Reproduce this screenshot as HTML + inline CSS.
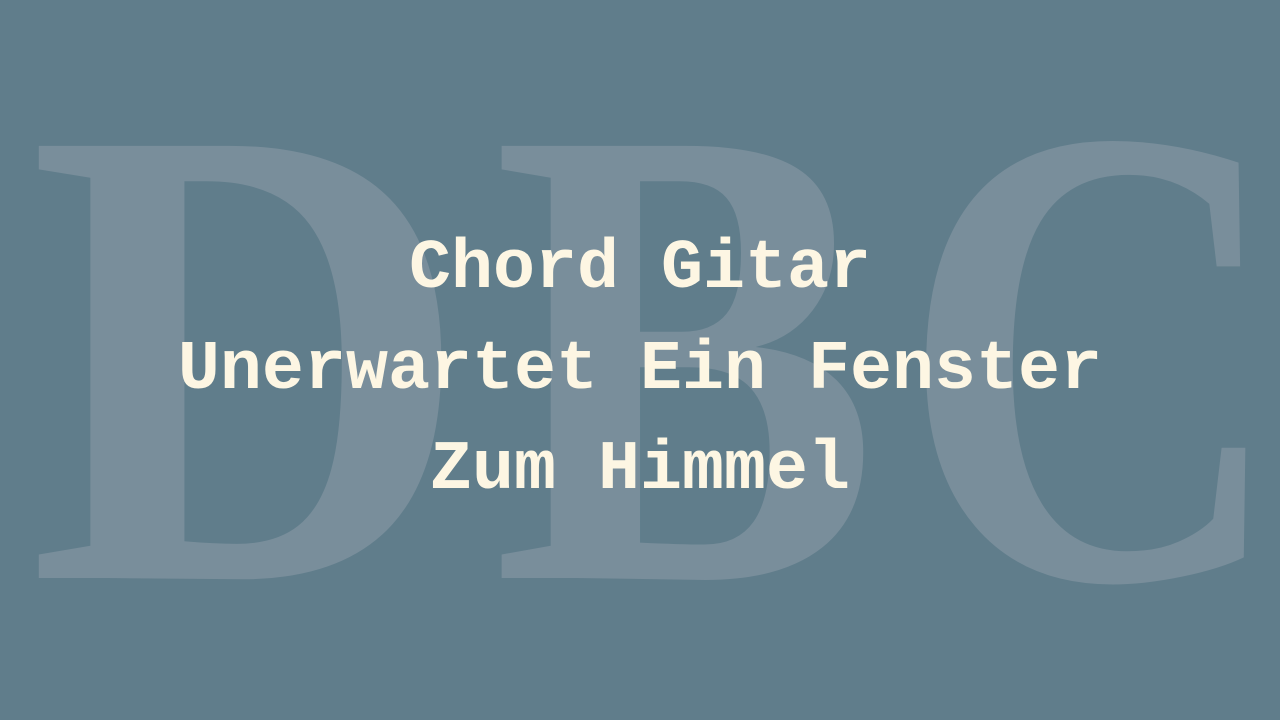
<!DOCTYPE html>
<html><head><meta charset="utf-8"><style>
html,body{margin:0;padding:0;}
body{width:1280px;height:720px;background:#607d8b;position:relative;overflow:hidden;}
svg{position:absolute;left:0;top:0;}
.t{position:absolute;left:0;width:1280px;text-align:center;font-family:"Liberation Mono",monospace;font-weight:bold;font-size:70px;color:#fdf6e3;line-height:100px;}
</style></head><body>
<svg width="1280" height="720">
<g fill="#798e9b" font-family="Liberation Serif,serif" font-weight="bold" font-size="660">
<text x="0" y="578" transform="translate(28 0) scale(0.93 1)">D</text>
<text x="0" y="578" transform="translate(492 0) scale(0.88 1)">B</text>
<text x="0" y="578" transform="translate(900 0) scale(0.81 1)">C</text>
</g>
</svg>
<div class="t" style="top:220px">Chord Gitar</div>
<div class="t" style="top:321px">Unerwartet Ein Fenster</div>
<div class="t" style="top:421px">Zum Himmel</div>
</body></html>
